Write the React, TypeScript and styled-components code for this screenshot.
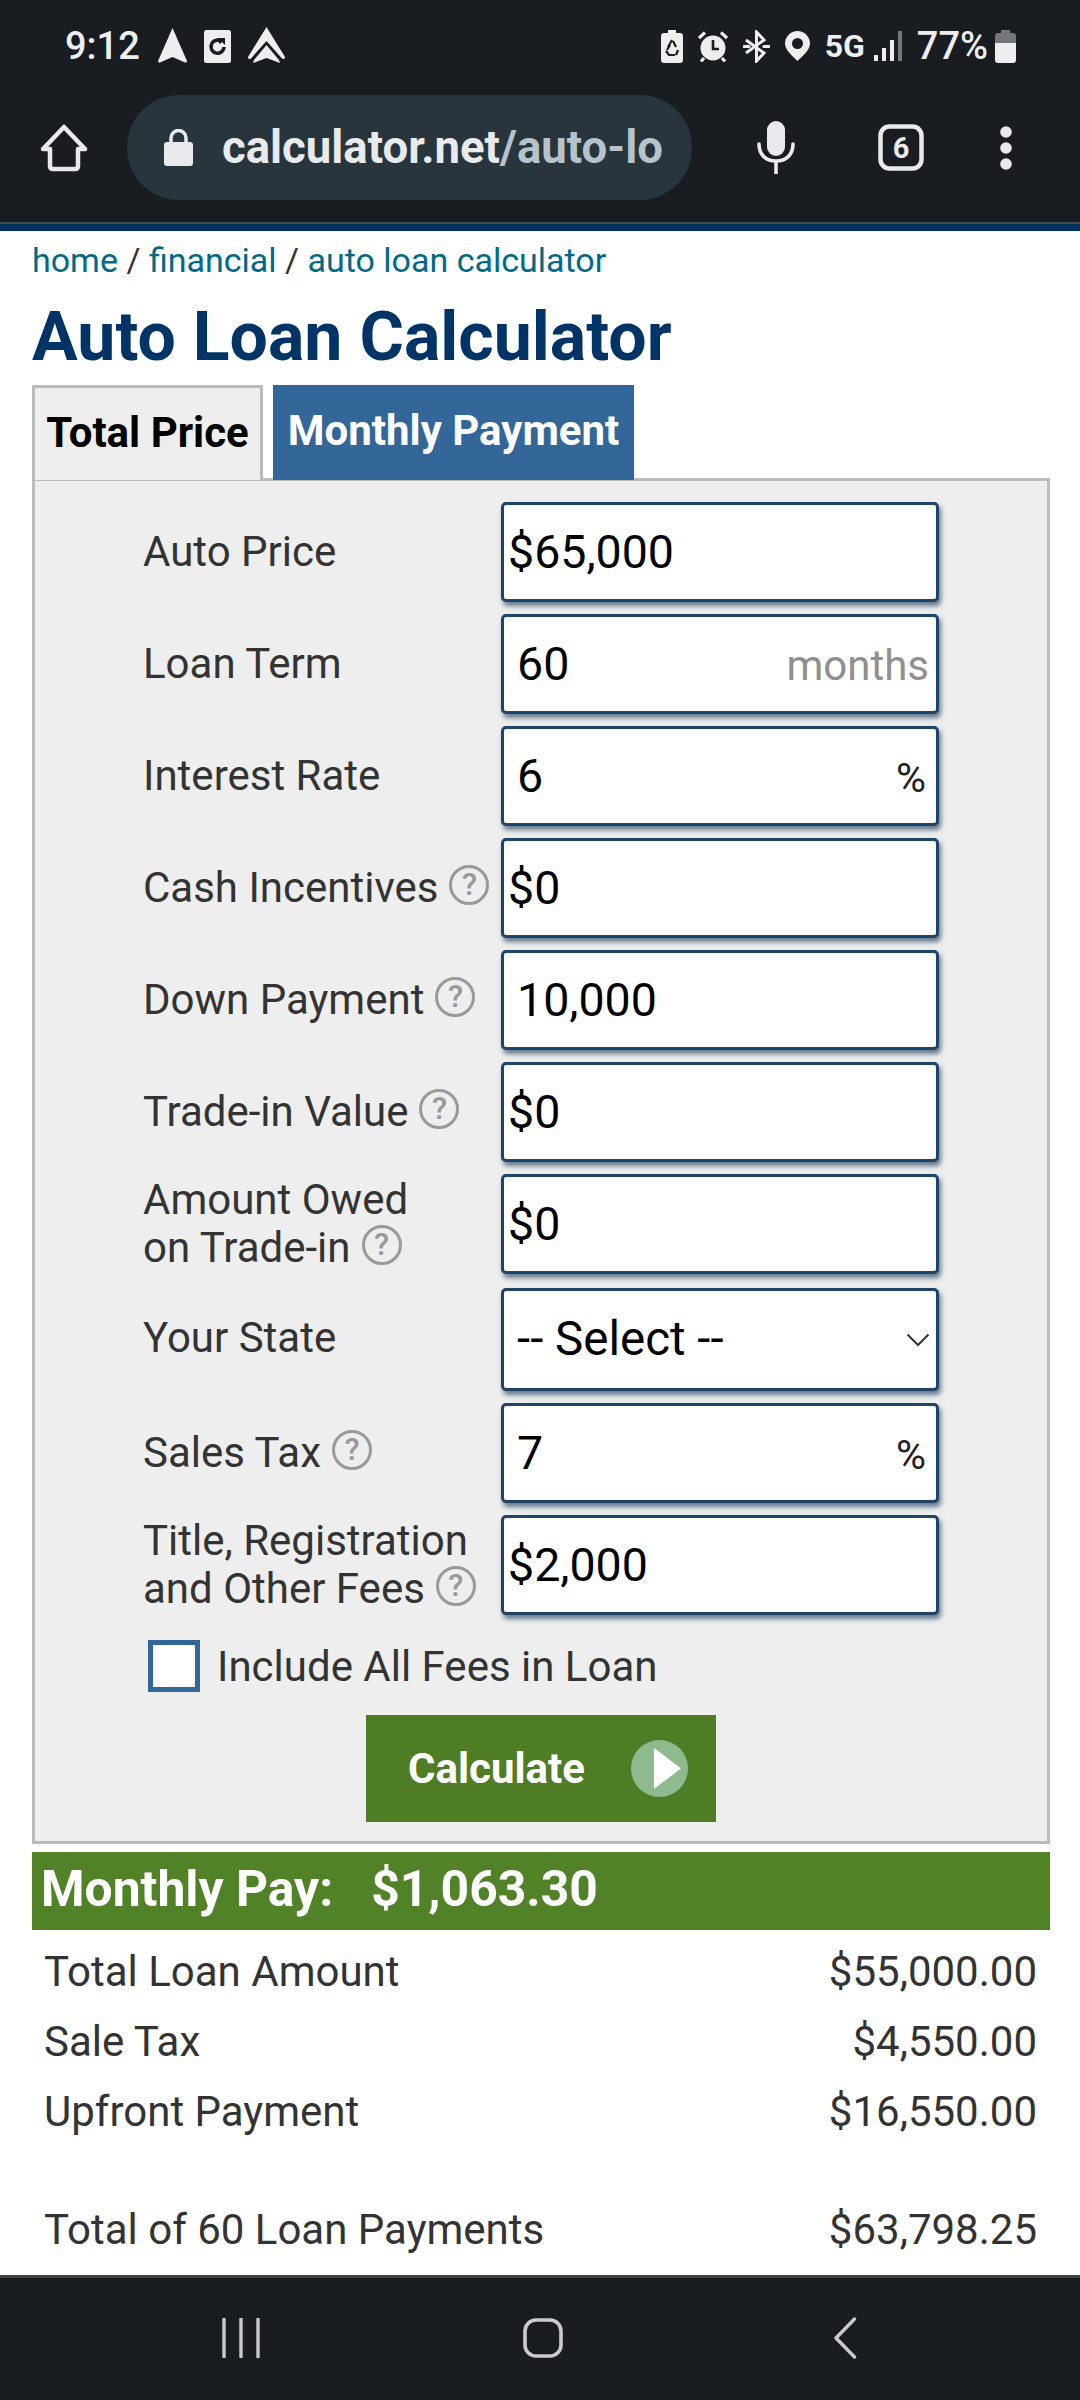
import React, { FunctionComponent } from "react";
import styled, { createGlobalStyle } from "styled-components";

const GlobalStyle = createGlobalStyle`
  html, body {
    margin: 0;
    padding: 0;
    background: #fff;
  }
  body {
    font-family: Roboto, "Liberation Sans", sans-serif;
  }
  * {
    box-sizing: border-box;
  }
`;

const Screen = styled.div`
  width: 1080px;
  height: 2400px;
  display: flex;
  flex-direction: column;
  overflow: hidden;
  background: #fff;
`;

const Header = styled.header`
  height: 231px;
  flex: none;
  background: #191c20;
  border-bottom: 7px solid #03325f;
  box-shadow: inset 0 -2px 0 #414c55;
`;

const StatusBar = styled.div`
  height: 92px;
  padding: 0 64px 0 65px;
  display: flex;
  align-items: center;
  justify-content: space-between;
  color: #eceef0;
`;

const StatusGroup = styled.div<{ $gap: number }>`
  display: flex;
  align-items: center;
  gap: ${(p) => p.$gap}px;
`;

const Clock = styled.span`
  font-size: 38px;
  line-height: 1;
  font-weight: 500;
  margin-right: 1px;
`;

const NetworkLabel = styled.span`
  font-size: 32px;
  font-weight: 700;
  line-height: 1;
`;

const BatteryLabel = styled.span`
  font-size: 38px;
  font-weight: 500;
  line-height: 1;
`;

const Toolbar = styled.div`
  height: 130px;
  display: flex;
  align-items: center;
  padding: 0 0 19px 40px;
`;

const ToolbarSlot = styled.div<{ $left: number }>`
  display: flex;
  margin-left: ${(p) => p.$left}px;
`;

const UrlPill = styled.div`
  width: 565px;
  height: 105px;
  margin-left: 39px;
  border-radius: 52px;
  background: #29353c;
  display: flex;
  align-items: center;
  padding-left: 37px;
`;

const UrlText = styled.div`
  width: 447px;
  margin-left: 29px;
  overflow: hidden;
  white-space: nowrap;
  font-size: 45.5px;
  font-weight: 700;
  color: #e8eaed;
`;

const UrlPath = styled.span`
  color: #b6c3cb;
`;

const Content = styled.main`
  flex: 1;
  min-height: 0;
  padding: 9px 30px 0 32px;
  overflow: hidden;
`;

const Breadcrumb = styled.div`
  font-size: 34px;
  line-height: 40px;
  color: #333;
`;

const CrumbLink = styled.a`
  color: #006a86;
  text-decoration: none;
`;

const Title = styled.h1`
  margin: 17px 0 8px;
  font-size: 68px;
  line-height: 80px;
  font-weight: 700;
  color: #003366;
`;

const TabBar = styled.div`
  display: flex;
  gap: 10px;
  margin-bottom: -2px;
  position: relative;
  z-index: 1;
`;

const Tab = styled.div<{ $active?: boolean }>`
  height: 95px;
  display: flex;
  align-items: center;
  justify-content: center;
  padding-bottom: 4px;
  font-size: 42px;
  font-weight: 700;
  width: ${(p) => (p.$active ? "231px" : "361px")};
  color: ${(p) => (p.$active ? "#000" : "#fff")};
  background: ${(p) => (p.$active ? "#eee" : "#336699")};
  border: ${(p) => (p.$active ? "3px solid #bbb" : "none")};
  border-bottom: none;
`;

const Panel = styled.section`
  background: #eee;
  border: 3px solid #bbb;
  padding: 21px 0 19px 108px;
  height: 1366px;
`;

const FormRows = styled.div`
  display: flex;
  flex-direction: column;
  gap: 12px;
`;

const Row = styled.div<{ $drop?: number }>`
  display: grid;
  grid-template-columns: 358px 438px;
  align-items: center;
  margin-top: ${(p) => p.$drop ?? 0}px;
`;

const Label = styled.div`
  font-size: 42px;
  line-height: 48px;
  color: #333;
  white-space: nowrap;
`;

const HelpMark = styled.span`
  display: inline-flex;
  align-items: center;
  justify-content: center;
  width: 40px;
  height: 40px;
  margin-left: 11px;
  border: 3.5px solid #999;
  border-radius: 50%;
  color: #999;
  font-size: 31px;
  font-weight: 500;
  line-height: 1;
  vertical-align: 7px;
`;

const Field = styled.div`
  position: relative;
  height: 100px;
`;

const TextInput = styled.input<{ $pad: number }>`
  width: 100%;
  height: 100%;
  padding: 0 0 0 ${(p) => p.$pad}px;
  border: 3px solid #1f4467;
  border-radius: 5px;
  background: #fff;
  box-shadow: 2px 4px 5px rgba(40, 70, 100, 0.7);
  font-family: inherit;
  font-size: 46.5px;
  color: #000;
  outline: none;
`;

const Suffix = styled.span<{ $muted?: boolean }>`
  position: absolute;
  right: ${(p) => (p.$muted ? "10px" : "13px")};
  top: 50%;
  transform: translateY(-46%);
  font-size: ${(p) => (p.$muted ? "42px" : "41px")};
  color: ${(p) => (p.$muted ? "#8f8f8f" : "#222")};
`;

const StateSelect = styled.select`
  width: 100%;
  height: 103px;
  padding: 0 0 2px 13px;
  border: 3px solid #1f4467;
  border-radius: 5px;
  background: #fff;
  box-shadow: 2px 4px 5px rgba(40, 70, 100, 0.7);
  font-family: inherit;
  font-size: 47.5px;
  color: #000;
  outline: none;
  appearance: none;
`;

const SelectCaret = styled.svg`
  position: absolute;
  right: 9px;
  top: 45px;
  pointer-events: none;
`;

const CheckRow = styled.label`
  display: flex;
  align-items: center;
  gap: 17px;
  margin: 25px 0 0 5px;
  font-size: 42px;
  color: #333;
`;

const CheckBox = styled.input`
  appearance: none;
  width: 52px;
  height: 52px;
  margin: 0;
  background: #fff;
  border: 5px solid #336699;
`;

const CalculateButton = styled.button`
  width: 350px;
  height: 107px;
  margin: 23px 0 0 223px;
  display: flex;
  align-items: center;
  padding: 0 28px 0 42px;
  justify-content: space-between;
  border: none;
  background: #4f7d26;
  color: #fff;
  font-family: inherit;
  font-size: 42px;
  font-weight: 700;
`;

const PayBar = styled.div`
  height: 78px;
  margin-top: 8px;
  padding: 0 0 4px 9px;
  display: flex;
  align-items: center;
  gap: 38px;
  background: #528228;
  color: #fff;
  font-size: 49.8px;
  font-weight: 700;
`;

const ResultList = styled.div`
  margin-top: 6px;
  padding: 0 13px 0 12px;
`;

const ResultRow = styled.div<{ $gapAbove?: boolean }>`
  height: 70px;
  display: flex;
  align-items: center;
  justify-content: space-between;
  margin-top: ${(p) => (p.$gapAbove ? "48px" : "0")};
  font-size: 42px;
  color: #333;
`;

const NavBar = styled.nav`
  height: 125px;
  flex: none;
  display: grid;
  grid-template-columns: repeat(3, 302px);
  justify-content: center;
  justify-items: center;
  align-items: center;
  padding: 0 0 3px 6px;
  background: #191c20;
  border-top: 3px solid #3d4249;
`;

const Help: FunctionComponent = () => <HelpMark>?</HelpMark>;

const Icon = styled.svg`
  display: block;
  flex: none;
`;

type FieldRow = {
  label: React.ReactNode;
  value: string;
  pad: number;
  suffix?: string;
};

const fields: FieldRow[] = [
  { label: "Auto Price", value: "$65,000", pad: 4 },
  { label: "Loan Term", value: "60", pad: 13, suffix: "months" },
  { label: "Interest Rate", value: "6", pad: 13, suffix: "%" },
  { label: <>Cash Incentives<Help /></>, value: "$0", pad: 4 },
  { label: <>Down Payment<Help /></>, value: "10,000", pad: 13 },
  { label: <>Trade-in Value<Help /></>, value: "$0", pad: 4 },
  { label: <>Amount Owed<br />on Trade-in<Help /></>, value: "$0", pad: 4 },
];

const results = [
  { name: "Total Loan Amount", amount: "$55,000.00" },
  { name: "Sale Tax", amount: "$4,550.00" },
  { name: "Upfront Payment", amount: "$16,550.00" },
];

const renderField = (label: React.ReactNode, value: string, pad: number, suffix?: string, key?: string) => (
  <Row key={key}>
    <Label>{label}</Label>
    <Field>
      <TextInput type="text" defaultValue={value} $pad={pad} />
      {suffix && <Suffix $muted={suffix === "months"}>{suffix}</Suffix>}
    </Field>
  </Row>
);

const StatusLeft = () => (
  <StatusGroup $gap={17}>
    <Clock>9:12</Clock>
    <Icon width="29" height="36" viewBox="0 0 29 36">
      <path d="M14.5 0 L29 33 Q29 35 27 34.5 L14.5 29 L2 34.5 Q0 35 0 33 Z" fill="#eceef0" />
    </Icon>
    <Icon width="27" height="33" viewBox="0 0 27 33">
      <rect width="27" height="33" rx="2.5" fill="#eceef0" />
      <path d="M18 12 A6.5 6.5 0 1 0 20 17" fill="none" stroke="#191c20" strokeWidth="3.5" />
      <path d="M13 8 H21 V15 L18 12 L15.5 14 Z" fill="#191c20" />
    </Icon>
    <Icon width="37" height="38" viewBox="0 0 37 38">
      <path d="M18.5 0 L37 30 Q37 33 34 31.5 L18.5 14 L3 31.5 Q0 33 0 30 Z" fill="#eceef0" />
      <path d="M18.5 18 L31 33 L32 36 L18.5 31 L5 36 L6 33 Z" fill="#eceef0" />
    </Icon>
  </StatusGroup>
);

const StatusRight = () => (
  <StatusGroup $gap={15}>
    <Icon width="22" height="33" viewBox="0 0 22 33">
      <path d="M7 0 H15 V3 H19 Q22 3 22 6 V30 Q22 33 19 33 H3 Q0 33 0 30 V6 Q0 3 3 3 H7 Z" fill="#eceef0" />
      <path d="M11 10 L7 17 M12 11 L15 17 M5 21 L8 25 H14 M17 20 L15 25 M6 20 L9 15" fill="none" stroke="#191c20" strokeWidth="2.2" />
    </Icon>
    <Icon width="30" height="31" viewBox="0 0 30 31">
      <circle cx="15" cy="17" r="12.5" fill="#eceef0" />
      <path d="M15 9 V18 H21" fill="none" stroke="#191c20" strokeWidth="2.6" />
      <path d="M1 7 L7 1.5 M29 7 L23 1.5 M6 27 L3 30.5 M24 27 L27 30.5" stroke="#eceef0" strokeWidth="3.2" />
    </Icon>
    <Icon width="27" height="33" viewBox="0 0 27 33">
      <path d="M3 10 L21 23 L13.5 31 V2 L21 10 L3 23" fill="none" stroke="#eceef0" strokeWidth="3" />
      <path d="M1 16.5 H6 M21 16.5 H26" stroke="#eceef0" strokeWidth="3.2" strokeLinecap="round" />
    </Icon>
    <Icon width="25" height="30" viewBox="0 0 25 30">
      <path fillRule="evenodd" d="M12.5 0 A12.5 12.5 0 0 1 25 12.5 C25 20 16 26 12.5 30 C9 26 0 20 0 12.5 A12.5 12.5 0 0 1 12.5 0 Z M12.5 7 A5.5 5.5 0 1 0 12.5 18 A5.5 5.5 0 1 0 12.5 7 Z" fill="#eceef0" />
    </Icon>
    <StatusGroup $gap={9}>
      <NetworkLabel>5G</NetworkLabel>
      <Icon width="28" height="30" viewBox="0 0 28 30">
        <rect x="0" y="24" width="4" height="6" fill="#eceef0" />
        <rect x="8" y="17" width="4" height="13" fill="#eceef0" />
        <rect x="16" y="9" width="4" height="21" fill="#eceef0" />
        <rect x="24" y="0" width="4" height="30" fill="#75787b" />
      </Icon>
    </StatusGroup>
    <StatusGroup $gap={7}>
      <BatteryLabel>77%</BatteryLabel>
      <Icon width="21" height="33" viewBox="0 0 21 33">
        <path d="M6 0 H15 V3 H18 Q21 3 21 6 V13 H0 V6 Q0 3 3 3 H6 Z" fill="#75787b" />
        <path d="M0 13 H21 V30 Q21 33 18 33 H3 Q0 33 0 30 Z" fill="#eceef0" />
      </Icon>
    </StatusGroup>
  </StatusGroup>
);

const ToolbarRow = () => (
  <Toolbar>
    <Icon width="48" height="48" viewBox="0 0 48 48">
      <path d="M24 3 L45 25 H38 V42 Q38 45 35 45 H13 Q10 45 10 42 V25 H3 Z" fill="none" stroke="#e8eaed" strokeWidth="4.5" strokeLinejoin="round" />
    </Icon>
    <UrlPill>
      <Icon width="29" height="37" viewBox="0 0 29 37">
        <path d="M7 15 V9 A7.5 7.5 0 0 1 22 9 V15" fill="none" stroke="#e8eaed" strokeWidth="3.5" />
        <rect x="0" y="13" width="29" height="24" rx="3" fill="#e8eaed" />
      </Icon>
      <UrlText>
        calculator.net<UrlPath>/auto-lo</UrlPath>
      </UrlText>
    </UrlPill>
    <ToolbarSlot $left={65}>
      <Icon width="38" height="53" viewBox="0 0 38 53">
        <rect x="10" y="0" width="18" height="35" rx="9" fill="#e8eaed" />
        <path d="M2 23 C2 34 9 40 19 40 C29 40 36 34 36 23 M19 40 V53" fill="none" stroke="#e8eaed" strokeWidth="3.6" strokeLinecap="round" />
      </Icon>
    </ToolbarSlot>
    <ToolbarSlot $left={83}>
      <Icon width="46" height="47" viewBox="0 0 46 47">
        <rect x="2.5" y="2.5" width="41" height="42" rx="9" fill="none" stroke="#e8eaed" strokeWidth="4.5" />
        <text x="23" y="34" textAnchor="middle" fontFamily="Roboto, sans-serif" fontWeight="700" fontSize="29" fill="#e8eaed">6</text>
      </Icon>
    </ToolbarSlot>
    <ToolbarSlot $left={76}>
      <Icon width="12" height="44" viewBox="0 0 12 44">
        <circle cx="6" cy="6" r="5.8" fill="#e8eaed" />
        <circle cx="6" cy="22" r="5.8" fill="#e8eaed" />
        <circle cx="6" cy="38" r="5.8" fill="#e8eaed" />
      </Icon>
    </ToolbarSlot>
  </Toolbar>
);

export default function App() {
  return (
    <>
      <GlobalStyle />
      <Screen>
        <Header>
          <StatusBar>
            <StatusLeft />
            <StatusRight />
          </StatusBar>
          <ToolbarRow />
        </Header>
        <Content>
          <Breadcrumb>
            <CrumbLink href="#">home</CrumbLink> / <CrumbLink href="#">financial</CrumbLink> /{" "}
            <CrumbLink href="#">auto loan calculator</CrumbLink>
          </Breadcrumb>
          <Title>Auto Loan Calculator</Title>
          <TabBar>
            <Tab $active>Total Price</Tab>
            <Tab>Monthly Payment</Tab>
          </TabBar>
          <Panel>
            <FormRows>
              {fields.map((f, i) => renderField(f.label, f.value, f.pad, f.suffix, `field-${i}`))}
              <Row $drop={2}>
                <Label>Your State</Label>
                <Field>
                  <StateSelect defaultValue="">
                    <option value="">-- Select --</option>
                  </StateSelect>
                  <SelectCaret width="24" height="14" viewBox="0 0 24 14">
                    <path d="M1.5 1.5 L12 12 L22.5 1.5" fill="none" stroke="#333" strokeWidth="2" />
                  </SelectCaret>
                </Field>
              </Row>
              <Row $drop={3}>
                <Label>Sales Tax<Help /></Label>
                <Field>
                  <TextInput type="text" defaultValue="7" $pad={13} />
                  <Suffix>%</Suffix>
                </Field>
              </Row>
              {renderField(<>Title, Registration<br />and Other Fees<Help /></>, "$2,000", 4, undefined, "fees")}
            </FormRows>
            <CheckRow>
              <CheckBox type="checkbox" />
              Include All Fees in Loan
            </CheckRow>
            <CalculateButton type="button">
              Calculate
              <Icon width="57" height="57" viewBox="0 0 57 57">
                <circle cx="28.5" cy="28.5" r="28.5" fill="#8fb98f" />
                <path d="M23 8 L50 28.5 L23 49 Z" fill="#fff" />
              </Icon>
            </CalculateButton>
          </Panel>
          <PayBar>
            <span>Monthly Pay:</span>
            <span>$1,063.30</span>
          </PayBar>
          <ResultList>
            {results.map((r) => (
              <ResultRow key={r.name}>
                <span>{r.name}</span>
                <span>{r.amount}</span>
              </ResultRow>
            ))}
            <ResultRow $gapAbove>
              <span>Total of 60 Loan Payments</span>
              <span>$63,798.25</span>
            </ResultRow>
          </ResultList>
        </Content>
        <NavBar>
          <Icon width="38" height="40" viewBox="0 0 38 40">
            <path d="M2 1 V39 M19 1 V39 M36 1 V39" stroke="#c9cbce" strokeWidth="3.4" strokeLinecap="round" />
          </Icon>
          <Icon width="40" height="40" viewBox="0 0 40 40">
            <rect x="2" y="2" width="36" height="36" rx="11" fill="none" stroke="#c9cbce" strokeWidth="3.6" />
          </Icon>
          <Icon width="24" height="42" viewBox="0 0 24 42">
            <path d="M21.5 2 L3 21 L21.5 40" fill="none" stroke="#c9cbce" strokeWidth="3.4" strokeLinecap="round" strokeLinejoin="round" />
          </Icon>
        </NavBar>
      </Screen>
    </>
  );
}
